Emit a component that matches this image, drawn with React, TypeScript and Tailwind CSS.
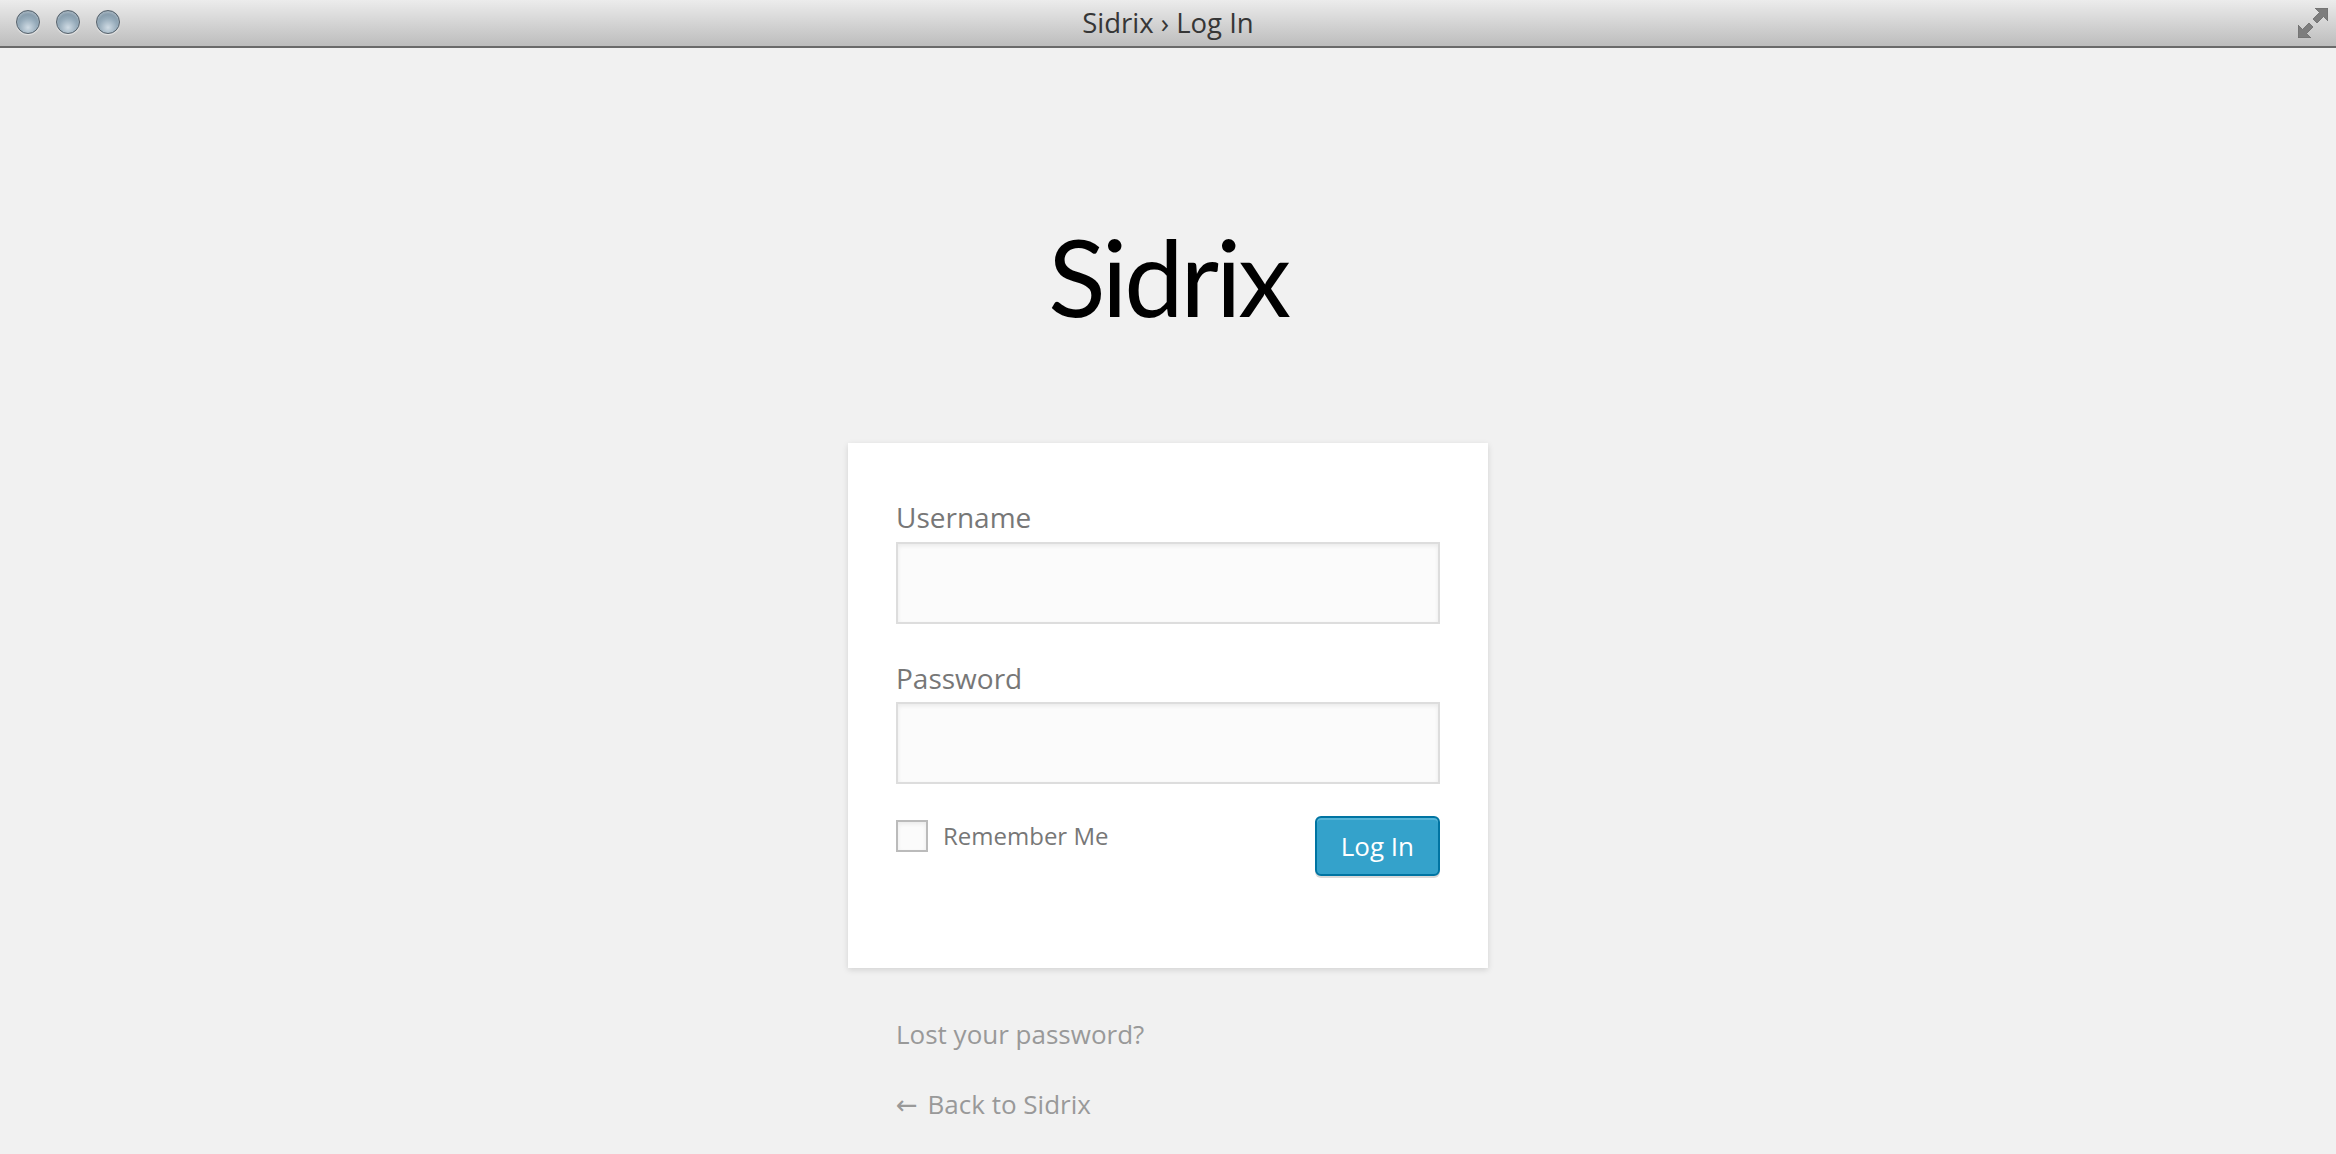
import { useState } from "react";

const TrafficLight = () => (
  <span className="block h-[24px] w-[24px] rounded-full border border-[#56626c] bg-[radial-gradient(circle_at_50%_75%,#cfdbe4_0%,#97acbb_45%,#6c8395_100%)] shadow-[inset_0_2px_2px_rgba(255,255,255,0.3),0_1px_1px_rgba(255,255,255,0.6)]" />
);

const TitleBar = () => (
  <header className="relative flex h-[48px] shrink-0 items-center justify-center border-b-2 border-[#6a6a6a] bg-gradient-to-b from-[#ececec] to-[#bdbdbd]">
    <div className="absolute left-[16px] top-[10px] flex gap-[16px]">
      <TrafficLight />
      <TrafficLight />
      <TrafficLight />
    </div>
    <span className="pb-[1px] font-['Open_Sans',sans-serif] text-[27.5px] text-[#363636]">
      Sidrix › Log In
    </span>
    <svg
      className="absolute right-[8px] top-[8px]"
      width="30"
      height="30"
      viewBox="0 0 30 30"
    >
      <path
        d="M30 0 L30 13 L25.5 8.5 L19 15 L15 11 L21.5 4.5 L17 0 Z"
        fill="#7d7d7d"
        stroke="#6a6a6a"
        strokeWidth="0.8"
      />
      <path
        d="M0 30 L0 17 L4.5 21.5 L11 15 L15 19 L8.5 25.5 L13 30 Z"
        fill="#7d7d7d"
        stroke="#6a6a6a"
        strokeWidth="0.8"
      />
    </svg>
  </header>
);

export default function App() {
  const [remember, setRemember] = useState(false);

  return (
    <div className="flex min-h-screen flex-col bg-[#f1f1f1] font-['Open_Sans',sans-serif]">
      <TitleBar />

      <main className="flex flex-col items-center">
        <h1 className="mt-[175px] mb-[114px] font-['Lato',sans-serif] text-[106px] font-normal leading-none tracking-[-0.03em] text-black">
          Sidrix
        </h1>

        <div className="w-[640px]">
          <form
            className="bg-white px-[48px] pt-[56px] pb-[92px] shadow-[0_2px_6px_rgba(0,0,0,0.13)]"
            onSubmit={(e) => e.preventDefault()}
          >
            <label className="block text-[28px] leading-[36px] text-[#777]">
              Username
            </label>
            <input
              type="text"
              className="mt-[7px] mb-[36px] block h-[82px] w-full border-2 border-[#ddd] bg-[#fbfbfb] px-[6px] text-[48px] shadow-[inset_0_2px_4px_rgba(0,0,0,0.07)] outline-none"
            />

            <label className="block text-[28px] leading-[36px] text-[#777]">
              Password
            </label>
            <input
              type="password"
              className="mt-[6px] block h-[82px] w-full border-2 border-[#ddd] bg-[#fbfbfb] px-[6px] text-[48px] shadow-[inset_0_2px_4px_rgba(0,0,0,0.07)] outline-none"
            />

            <div className="mt-[32px] flex items-start justify-between">
              <label
                className="mt-[4px] flex items-center gap-[15px] text-[24px] leading-[32px] text-[#777]"
                onClick={() => setRemember(!remember)}
              >
                <span className="block h-[32px] w-[32px] border-2 border-[#bbb] bg-[#fbfbfb] shadow-[inset_0_2px_4px_rgba(0,0,0,0.07)]" />
                Remember Me
              </label>
              <button
                type="submit"
                className="h-[60px] rounded-[6px] border-2 border-[#0074a2] bg-[#34a2cb] px-[24px] pb-[4px] text-[26px] leading-[56px] text-white shadow-[inset_0_2px_0_rgba(120,200,230,0.5),0_2px_0_rgba(0,0,0,0.15)]"
              >
                Log In
              </button>
            </div>
          </form>

          <p className="mt-[48px] px-[48px] text-[26px] leading-[36px] text-[#999]">
            Lost your password?
          </p>
          <p className="mt-[34px] px-[48px] text-[26px] leading-[36px] text-[#999]">
            <span className="mr-[3px] font-['DejaVu_Sans',sans-serif]">←</span>{" "}
            Back to Sidrix
          </p>
        </div>
      </main>
    </div>
  );
}
